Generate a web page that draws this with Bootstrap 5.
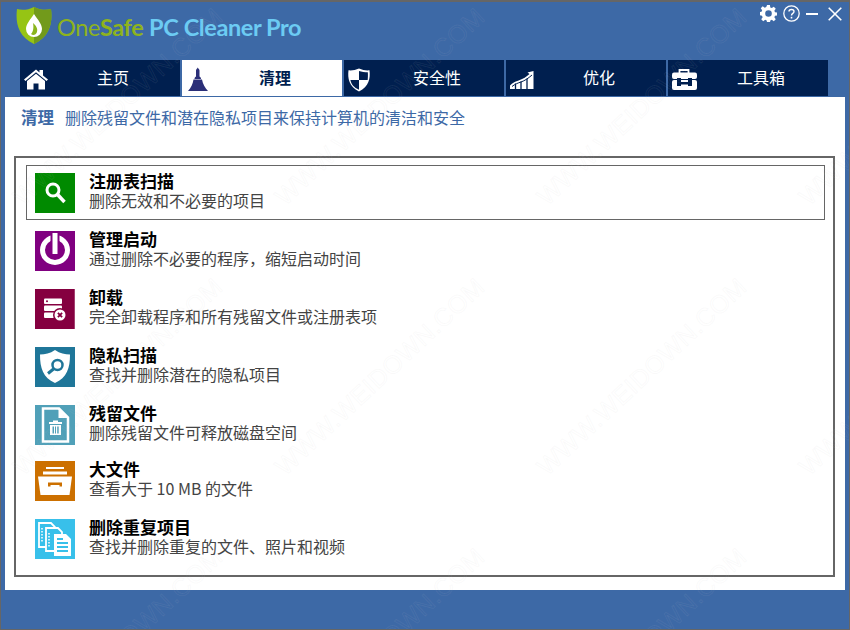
<!DOCTYPE html>
<html lang="zh-CN">
<head>
<meta charset="utf-8">
<title>OneSafe PC Cleaner Pro</title>
<link href="https://cdn.jsdelivr.net/npm/bootstrap@5.3.0/dist/css/bootstrap.min.css" rel="stylesheet">
<style>
html,body{margin:0;width:850px;height:630px;overflow:hidden;background:#3d69a6;}
body{font-family:"Noto Sans CJK SC","Liberation Sans",sans-serif;}
.app-window{width:850px;height:630px;background:#3d69a6;border:1px solid #666;border-top-width:2px;overflow:hidden;}
.app-top{height:58px;padding:5px 7px 0 15px;}
.logo-word{font-family:Lato,"Open Sans",sans-serif;font-size:23.5px;letter-spacing:-.4px;line-height:1;margin:9px 0 0 5px;}
.word-a{color:#8eb31c;}
.word-b{color:#8eb31c;font-weight:700;}
.word-c{color:#6ccbf3;font-weight:700;}
.win-tools{gap:6px;margin-top:-2px;}
.tab-strip{padding-left:19px;gap:2px;height:36px;}
.tab-cell{width:160px;height:36px;background:#001f4f;color:#fff;font-size:16px;}
.tab-cell.is-on{background:#fff;color:#001f4f;font-weight:700;}
.tab-ico{width:36px;height:36px;flex:none;}
.tab-name{flex:1;text-align:center;line-height:34px;padding-right:10px;}
.main-sheet{margin:1px 4px 0 4px;height:493px;background:#fff;padding:0 10px 0 9px;}
.lead-line{height:59px;padding:8px 0 0 8px;font-size:16px;line-height:24px;color:#3d69a6;}
.lead-line b{margin-right:11px;font-size:16.5px;margin-left:-1px;}
.task-frame{height:421px;border:2px solid #666;padding:7px 8px 7px 10px;}
.task-row{height:58px;border:1px solid transparent;padding:7px 0 0 8px;}
.task-row.is-sel{height:55px;border-color:#666;margin-bottom:3px;}
.task-row.is-tall{height:56px;}
.task-tile{width:40px;height:40px;flex:none;}
.task-text{margin-left:14px;margin-top:-2px;}
.task-title{font-size:17px;font-weight:700;color:#000;line-height:19px;}
.task-sub{font-size:16px;color:#444;line-height:20px;}
.mark-layer{position:absolute;left:0;top:0;width:850px;height:630px;overflow:hidden;pointer-events:none;}
.mark-text{position:absolute;width:290px;text-align:center;font-family:"Liberation Sans",sans-serif;font-size:25px;letter-spacing:.5px;color:transparent;-webkit-text-stroke:1px rgba(200,200,200,.09);transform:rotate(-43deg);white-space:nowrap;}
.m1{left:-28px;top:86px}.m2{left:234px;top:86px}.m3{left:496px;top:86px}.m4{left:758px;top:86px}
.m5{left:-28px;top:356px}.m6{left:234px;top:356px}.m7{left:496px;top:356px}.m8{left:758px;top:356px}
.m9{left:-28px;top:626px}.m10{left:234px;top:626px}.m11{left:496px;top:626px}
</style>
</head>
<body>
<div class="app-window position-relative">
  <div class="app-top d-flex align-items-start justify-content-between">
    <div class="d-flex align-items-start">
      <svg width="36" height="38" viewBox="0 0 36 38" aria-hidden="true">
        <path d="M18 0C12 3 6 3.500 1 2C-.5 14 1 29 18 37C35 29 36.500 14 35 2C30 3.500 24 3 18 0Z" fill="#96c414"/>
        <path d="M18 0C24 3 30 3.500 35 2C36.500 14 35 29 18 37Z" fill="#729a1b"/>
        <path d="M18 7C22 13 26 17 26 22A8 8 0 0 1 10 22C10 17 14 13 18 7Z" fill="#fff"/>
        <path d="M17 16C20 19 22 21 21 25C20 28 17 29 15 27C17 25 18 21 17 16Z" fill="#8ab51c"/>
      </svg>
      <div class="logo-word"><span class="word-a">One</span><span class="word-b">Safe</span> <span class="word-c">PC Cleaner Pro</span></div>
    </div>
    <div class="win-tools d-flex align-items-center">
      <svg width="17" height="17" viewBox="0 0 18 18" aria-hidden="true"><path fill="#fff" fill-rule="evenodd" d="M7.500 0h3l.4 2.600 1.600.7 2.100-1.500 2.100 2.100-1.500 2.100.7 1.600 2.600.4v3l-2.600.4-.7 1.600 1.500 2.100-2.100 2.100-2.100-1.500-1.600.7-.4 2.600h-3l-.4-2.600-1.600-.7-2.100 1.500-2.100-2.100 1.500-2.100-.7-1.600L-1 10.500v-3l2.600-.4.700-1.600-1.500-2.100 2.100-2.100 2.100 1.500 1.600-.7zM9 5.500a3.500 3.500 0 1 0 0 7a3.500 3.500 0 1 0 0-7z"/></svg>
      <svg width="17" height="17" viewBox="0 0 17 17" aria-hidden="true"><circle cx="8.500" cy="8.500" r="7.700" fill="none" stroke="#fff" stroke-width="1.300"/><path d="M6 6.500C6 3.800 11 3.800 11 6.500C11 8.500 8.500 8.300 8.500 10.500" fill="none" stroke="#fff" stroke-width="1.400"/><rect x="7.700" y="11.800" width="1.600" height="1.700" fill="#fff"/></svg>
      <svg width="12" height="16" viewBox="0 0 12 16" aria-hidden="true"><rect x="0" y="7" width="12" height="2" fill="#fff"/></svg>
      <svg width="14" height="14" viewBox="0 0 14 14" class="ms-1" aria-hidden="true"><path d="M.7.700L13.300 13.300M13.300.700L.7 13.300" stroke="#fff" stroke-width="1.600"/></svg>
    </div>
  </div>

  <div class="tab-strip d-flex">
    <div class="tab-cell d-flex">
      <svg class="tab-ico" viewBox="0 0 36 36" aria-hidden="true"><path fill="#fff" d="M4 19.500L16 9.500L19.500 12.400V10H23V15.400L28 19.500L26.500 21L16 12.300L5.500 21Z"/><path fill="#fff" d="M7 21L16 13.800L25 21V29.500H18.500V23.500H13.500V29.500H7Z"/></svg>
      <div class="tab-name">主页</div>
    </div>
    <div class="tab-cell is-on d-flex">
      <svg class="tab-ico" viewBox="0 0 36 36" aria-hidden="true"><path fill="#2b2f78" d="M14 10.500C14 9.300 15 9 15.700 7.500C16.500 9 17.500 9.300 17.500 10.500V16.500C18.500 17 19 18 19 19H12.500C12.500 18 13 17 14 16.500Z"/><path fill="#2b2f78" d="M11.500 19.500H20C20.800 24 23 28 26 31H6C9 28 10.800 24 11.500 19.500Z"/></svg>
      <div class="tab-name">清理</div>
    </div>
    <div class="tab-cell d-flex">
      <svg class="tab-ico" viewBox="0 0 36 36" aria-hidden="true"><path fill="#fff" d="M15 8.500C11.500 10 7.500 10.800 4.500 10.300C3.500 18.500 5 26.500 15 31.500C25 26.500 26.500 18.500 25.500 10.300C22.500 10.800 18.500 10 15 8.500Z"/><path fill="#001f4f" d="M15 11V20H23.700C24 17 24 14.500 23.800 12.300C21 12.300 17.500 11.800 15 11ZM15 20H6.400C7.200 24.500 10 27.500 15 29.700Z"/></svg>
      <div class="tab-name">安全性</div>
    </div>
    <div class="tab-cell d-flex">
      <svg class="tab-ico" viewBox="0 0 36 36" aria-hidden="true"><path fill="#fff" d="M4 25.500C6.500 23 9 21.800 12 20.800C17 19 21 16.500 23.500 14L21.500 12.500L27.500 11V29H4Z"/><path fill="none" stroke="#001f4f" stroke-width="1.300" d="M9.500 29V23.500M15 29V21.500M21 29V18.500"/><path fill="none" stroke="#001f4f" stroke-width="1" d="M6 26.500C9 24 12 23 15 22C19 20.500 22 18.500 26 15"/></svg>
      <div class="tab-name">优化</div>
    </div>
    <div class="tab-cell d-flex">
      <svg class="tab-ico" viewBox="0 0 36 36" aria-hidden="true"><path fill="none" stroke="#fff" stroke-width="1.800" d="M11.500 13V10H20.500V13"/><rect x="4" y="12.500" width="25" height="6.500" rx="2" fill="#fff"/><rect x="4" y="20" width="25" height="10" rx="2" fill="#fff"/><path fill="#001f4f" d="M9 18H13V22H20V18H24V26H20V24.500H13V26H9Z"/></svg>
      <div class="tab-name">工具箱</div>
    </div>
  </div>

  <div class="main-sheet">
    <div class="lead-line"><b>清理</b>删除残留文件和潜在隐私项目来保持计算机的清洁和安全</div>
    <div class="task-frame">
      <div class="task-row is-sel d-flex">
        <svg class="task-tile" viewBox="0 0 40 40" aria-hidden="true"><rect width="40" height="40" fill="#008a00"/><circle cx="18" cy="17" r="6" fill="none" stroke="#fff" stroke-width="3"/><path d="M22.500 21.500L29.500 29" stroke="#fff" stroke-width="3.500"/></svg>
        <div class="task-text"><div class="task-title">注册表扫描</div><div class="task-sub">删除无效和不必要的项目</div></div>
      </div>
      <div class="task-row d-flex">
        <svg class="task-tile" viewBox="0 0 40 40" aria-hidden="true"><rect width="40" height="40" fill="#800080"/><circle cx="20" cy="19" r="12.500" fill="none" stroke="#fff" stroke-width="5"/><rect x="15.500" y="2" width="9" height="22" fill="#800080"/><rect x="17.500" y="2" width="5" height="21" fill="#fff"/></svg>
        <div class="task-text"><div class="task-title">管理启动</div><div class="task-sub">通过删除不必要的程序，缩短启动时间</div></div>
      </div>
      <div class="task-row d-flex">
        <svg class="task-tile" viewBox="0 0 40 40" aria-hidden="true"><rect width="40" height="40" fill="#850040"/><rect x="39" width="1" height="40" fill="#a34070"/><rect x="9" y="9.500" width="18" height="5.500" rx="1" fill="#fff"/><rect x="9" y="16.500" width="18" height="5.500" rx="1" fill="#fff"/><rect x="9" y="23.500" width="14" height="5.500" rx="1" fill="#fff"/><circle cx="12" cy="12.200" r="1" fill="#850040"/><circle cx="25" cy="26" r="7" fill="#850040"/><circle cx="25" cy="26" r="5.500" fill="#fff"/><path d="M22.900 23.900L27.100 28.100M27.100 23.900L22.900 28.100" stroke="#850040" stroke-width="1.800"/></svg>
        <div class="task-text"><div class="task-title">卸载</div><div class="task-sub">完全卸载程序和所有残留文件或注册表项</div></div>
      </div>
      <div class="task-row d-flex">
        <svg class="task-tile" viewBox="0 0 40 40" aria-hidden="true"><rect width="40" height="40" fill="#1f7699"/><path d="M20 3C15 6.500 10 7.500 5 7.500C5 21 8 30.500 20 36C32 30.500 35 21 35 7.500C30 7.500 25 6.500 20 3Z" fill="#fff"/><circle cx="22.500" cy="18" r="5" fill="none" stroke="#1f7699" stroke-width="2.500"/><path d="M18.500 22L13 26.500" stroke="#1f7699" stroke-width="3"/></svg>
        <div class="task-text"><div class="task-title">隐私扫描</div><div class="task-sub">查找并删除潜在的隐私项目</div></div>
      </div>
      <div class="task-row is-tall d-flex">
        <svg class="task-tile" viewBox="0 0 40 40" aria-hidden="true"><rect width="40" height="40" fill="#50a0b8"/><path d="M8 3.500H24L33 12.500V36.500H8Z" fill="none" stroke="#fff" stroke-width="2.500"/><path d="M23.500 3.500V13H33Z" fill="#fff"/><rect x="14" y="17" width="13" height="2" fill="#fff"/><rect x="18" y="15.500" width="5" height="2" fill="#fff"/><path fill="#fff" fill-rule="evenodd" d="M15 20H26V30H15ZM17.500 21.500V28.500H19V21.500ZM20 21.500V28.500H21V21.500ZM22.200 21.500V28.500H23.700V21.500Z"/></svg>
        <div class="task-text"><div class="task-title">残留文件</div><div class="task-sub">删除残留文件可释放磁盘空间</div></div>
      </div>
      <div class="task-row d-flex">
        <svg class="task-tile" viewBox="0 0 40 40" aria-hidden="true"><rect width="40" height="40" fill="#cc7000"/><rect x="11" y="6" width="18" height="2" fill="#fff"/><rect x="8" y="10.500" width="24" height="3" fill="#fff"/><path d="M3 15.500H37L34.500 34H5.500Z" fill="#fff"/><path d="M13 21.500H27V25.500H24.500V24H15.500V25.500H13Z" fill="#cc7000"/></svg>
        <div class="task-text"><div class="task-title">大文件</div><div class="task-sub">查看大于 10 MB 的文件</div></div>
      </div>
      <div class="task-row d-flex">
        <svg class="task-tile" viewBox="0 0 40 40" aria-hidden="true"><rect width="40" height="40" fill="#38c0ea"/><path d="M4 4H16L20 8V28H4Z" fill="#38c0ea" stroke="#fff" stroke-width="1.800"/><path d="M11 9H23L27 13V32H11Z" fill="#38c0ea" stroke="#fff" stroke-width="1.800"/><path d="M19 15H31L36 20V37H19Z" fill="#fff"/><path d="M7 9V24M14 14V29" stroke="#fff" stroke-width="1.500" stroke-dasharray="1.500 1.500"/><path d="M22 20H28M22 24H33M22 28H33M22 32H33" stroke="#38c0ea" stroke-width="1.800"/></svg>
        <div class="task-text"><div class="task-title">删除重复项目</div><div class="task-sub">查找并删除重复的文件、照片和视频</div></div>
      </div>
    </div>
  </div>

  <div class="mark-layer" aria-hidden="true">
    <span class="mark-text m1">WWW.WEIDOWN.COM</span><span class="mark-text m2">WWW.WEIDOWN.COM</span><span class="mark-text m3">WWW.WEIDOWN.COM</span><span class="mark-text m4">WWW.WEIDOWN.COM</span>
    <span class="mark-text m5">WWW.WEIDOWN.COM</span><span class="mark-text m6">WWW.WEIDOWN.COM</span><span class="mark-text m7">WWW.WEIDOWN.COM</span><span class="mark-text m8">WWW.WEIDOWN.COM</span>
    <span class="mark-text m9">WWW.WEIDOWN.COM</span><span class="mark-text m10">WWW.WEIDOWN.COM</span><span class="mark-text m11">WWW.WEIDOWN.COM</span>
  </div>
</div>
<script src="https://cdn.jsdelivr.net/npm/bootstrap@5.3.0/dist/js/bootstrap.bundle.min.js"></script>
</body>
</html>
